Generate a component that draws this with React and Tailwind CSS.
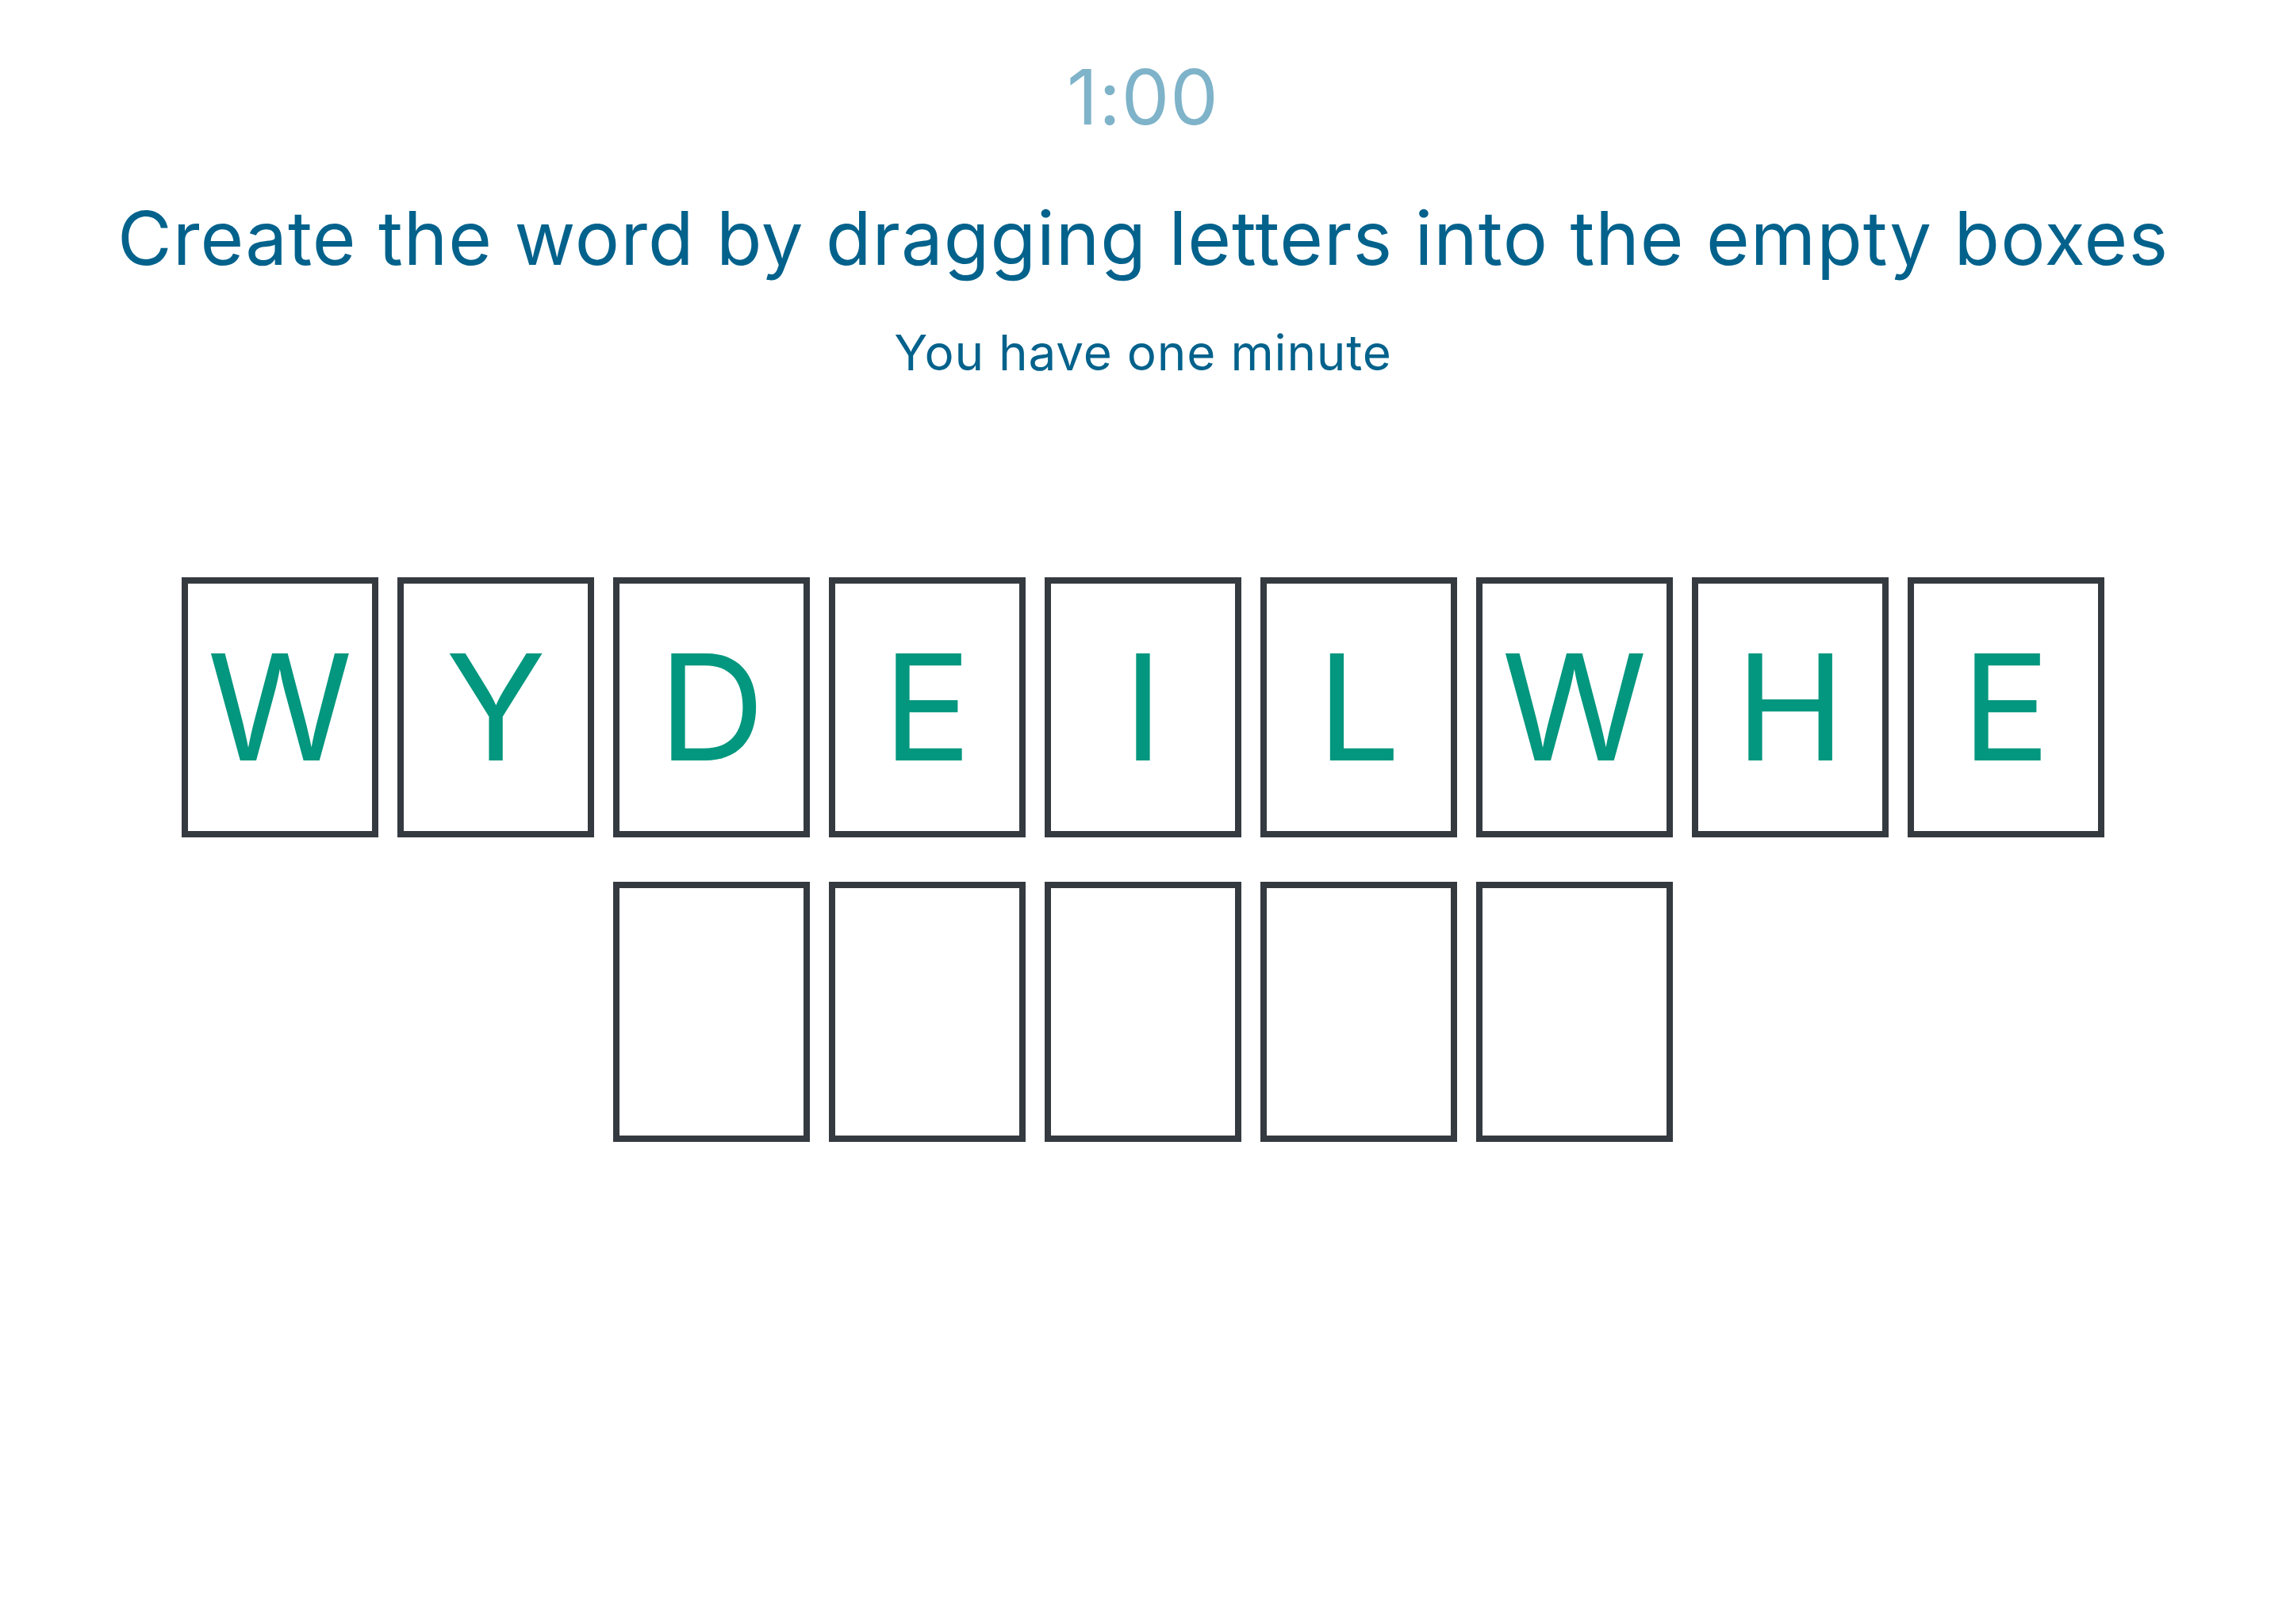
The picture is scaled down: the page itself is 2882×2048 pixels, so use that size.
import React from "react";

const letters = ["W", "Y", "D", "E", "I", "L", "W", "H", "E"];
const slots = 5;

const Tile = ({ children }) => (
  <div className="w-[248px] h-[328px] border-[8px] border-[#343a40] bg-white flex items-center justify-center text-[186px] leading-none text-[#02977e]">
    {children}
  </div>
);

const App = () => {
  return (
    <div className="min-h-screen bg-white flex flex-col items-center font-['Inter',sans-serif]">
      <div className="mt-[74px] text-[96px] leading-none tracking-[1px] text-[#7eb3c9]">1:00</div>

      <h1 className="mt-[83px] text-[94px] leading-none tracking-[1px] text-[#03628c]">
        Create the word by dragging letters into the empty boxes
      </h1>
      <p className="mt-[67px] text-[62px] leading-none tracking-[0.8px] text-[#03628c]">You have one minute</p>

      {/* letters to drag */}
      <div className="mt-[252px] flex gap-[24px]">
        {letters.map((l, i) => (
          <Tile key={i}>{l}</Tile>
        ))}
      </div>

      {/* empty answer boxes */}
      <div className="mt-[56px] flex gap-[24px]">
        {Array.from({ length: slots }).map((_, i) => (
          <Tile key={i} />
        ))}
      </div>
    </div>
  );
};

export default App;
